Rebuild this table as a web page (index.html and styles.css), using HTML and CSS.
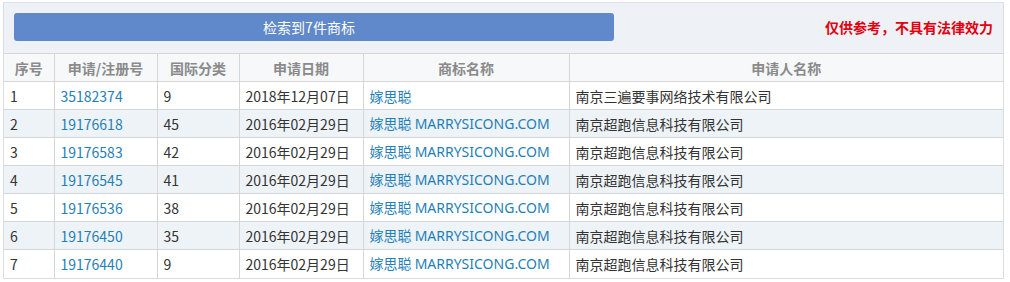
FILE: index.html
```html
<!DOCTYPE html>
<html lang="zh-CN">
<head>
<meta charset="utf-8">
<title>商标检索</title>
<link rel="stylesheet" href="styles.css">
</head>
<body>
<div class="wrap">
  <div class="topbar">
    <div class="result-btn">检索到7件商标</div>
    <div class="notice">仅供参考，不具有法律效力</div>
  </div>
  <table class="grid">
    <colgroup>
      <col class="c1"><col class="c2"><col class="c3"><col class="c4"><col class="c5"><col class="c6">
    </colgroup>
    <thead>
      <tr><th>序号</th><th>申请/注册号</th><th>国际分类</th><th>申请日期</th><th>商标名称</th><th>申请人名称</th></tr>
    </thead>
    <tbody>
      <tr><td>1</td><td><a class="lnk">35182374</a></td><td>9</td><td>2018年12月07日</td><td><a class="lnk">嫁思聪</a></td><td>南京三遍要事网络技术有限公司</td></tr>
      <tr><td>2</td><td><a class="lnk">19176618</a></td><td>45</td><td>2016年02月29日</td><td><a class="lnk">嫁思聪 <span class="en">MARRYSICONG.COM</span></a></td><td>南京超跑信息科技有限公司</td></tr>
      <tr><td>3</td><td><a class="lnk">19176583</a></td><td>42</td><td>2016年02月29日</td><td><a class="lnk">嫁思聪 <span class="en">MARRYSICONG.COM</span></a></td><td>南京超跑信息科技有限公司</td></tr>
      <tr><td>4</td><td><a class="lnk">19176545</a></td><td>41</td><td>2016年02月29日</td><td><a class="lnk">嫁思聪 <span class="en">MARRYSICONG.COM</span></a></td><td>南京超跑信息科技有限公司</td></tr>
      <tr><td>5</td><td><a class="lnk">19176536</a></td><td>38</td><td>2016年02月29日</td><td><a class="lnk">嫁思聪 <span class="en">MARRYSICONG.COM</span></a></td><td>南京超跑信息科技有限公司</td></tr>
      <tr><td>6</td><td><a class="lnk">19176450</a></td><td>35</td><td>2016年02月29日</td><td><a class="lnk">嫁思聪 <span class="en">MARRYSICONG.COM</span></a></td><td>南京超跑信息科技有限公司</td></tr>
      <tr><td>7</td><td><a class="lnk">19176440</a></td><td>9</td><td>2016年02月29日</td><td><a class="lnk">嫁思聪 <span class="en">MARRYSICONG.COM</span></a></td><td>南京超跑信息科技有限公司</td></tr>
    </tbody>
  </table>
</div>
</body>
</html>
```
FILE: styles.css
```css
* { box-sizing: border-box; }
body {
  margin: 0;
  background: #fff;
  font-family: "Noto Sans CJK SC", "Noto Sans", sans-serif;
  font-size: 14px;
  color: #333;
}
.wrap {
  margin: 2px 6px 0 3px;
  border: 1px solid #d9dde2;
  border-top-color: #dfe3e8;
}
.topbar {
  height: 50px;
  background: #eef2f7;
  display: flex;
  align-items: center;
  justify-content: space-between;
  padding: 0 10px 2px 10px;
}
.result-btn {
  width: 600px;
  height: 28px;
  border-radius: 3px;
  background: #5f89cb;
  color: #fff;
  display: flex;
  align-items: center;
  justify-content: center;
  font-size: 14px;
  padding-right: 10px;
}
.notice {
  color: #e3000f;
  font-weight: bold;
  font-size: 14px;
}
.grid {
  width: 100%;
  border-collapse: collapse;
  table-layout: fixed;
}
.c1 { width: 50px; }
.c2 { width: 103px; }
.c3 { width: 82px; }
.c4 { width: 124px; }
.c5 { width: 206px; }
.grid th, .grid td {
  height: 28px;
  border: 1px solid #d6d6d6;
  padding: 0 6px;
  white-space: nowrap;
  overflow: hidden;
  line-height: 26px;
}
.grid tr > :first-child { border-left: none; }
.grid tr > :last-child { border-right: none; }
.grid tbody tr:last-child td { border-bottom: none; }
.grid th {
  background: #f6f8fa;
  color: #8a8a8a;
  font-weight: bold;
  font-size: 14px;
  text-align: center;
}
.grid td { text-align: left; color: #333; }
.grid tbody tr:nth-child(even) td { background: #eef3f8; }
.lnk { color: #1f80b6; text-decoration: none; }
.en { font-family: "Noto Sans", "Open Sans", sans-serif; }
```
